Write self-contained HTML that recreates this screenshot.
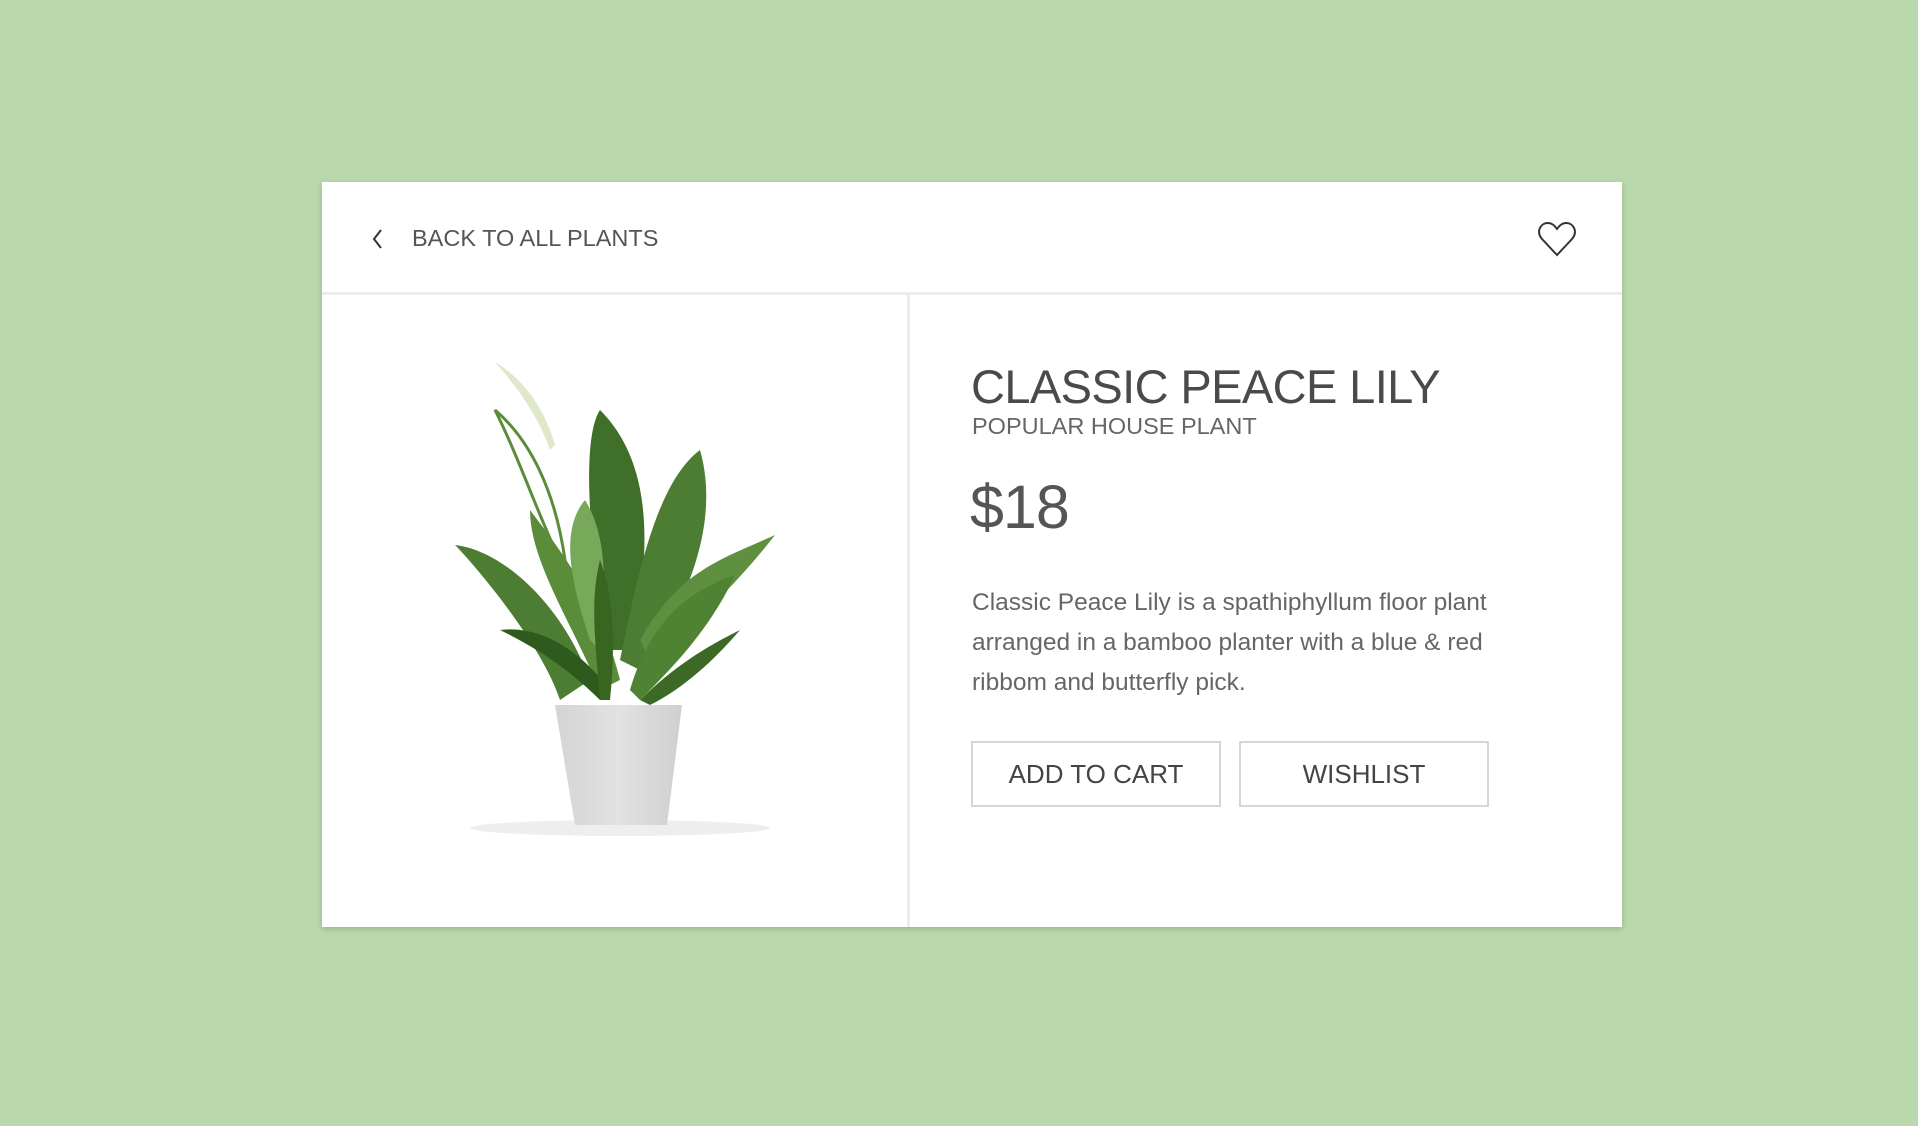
<!DOCTYPE html>
<html><head><meta charset="utf-8"><style>
html,body{margin:0;padding:0}
body{width:1918px;height:1126px;background:#b9d9ac;position:relative;overflow:hidden;font-family:"Liberation Sans",Arial,sans-serif}
.card{position:absolute;left:322px;top:182px;width:1300px;height:745px;background:#fff;box-shadow:0 2px 6px rgba(0,0,0,.18)}
.hdr{position:absolute;left:0;top:0;width:1300px;height:110px;border-bottom:3px solid #ececec}
.div{position:absolute;left:585px;top:113px;width:3px;height:632px;background:#ececec}
.t{position:absolute;white-space:nowrap}
.btn{position:absolute;top:559px;width:246px;height:62px;border:2px solid #d6d6d6;color:#444;font-size:26px;text-align:center;line-height:62px}
</style></head><body>
<div class="card">
<div class="hdr"></div>
<div class="div"></div>
<svg class="t" style="left:48px;top:45px" width="16" height="24" viewBox="0 0 16 24"><path d="M11 3 L4 12 L11 21" fill="none" stroke="#333" stroke-width="2"/></svg>
<div class="t" style="left:90px;top:43px;font-size:23.5px;color:#555">BACK TO ALL PLANTS</div>
<svg class="t" style="left:1215px;top:38px" width="40" height="38" viewBox="0 0 40 38"><path d="M20 35 L5 19 C-1 12 3 3 11 3 C15 3 18 6 20 9 C22 6 25 3 29 3 C37 3 41 12 35 19 Z" fill="none" stroke="#333" stroke-width="2"/></svg>
<div class="t" style="left:649px;top:177px;font-size:47px;color:#4a4a4a;letter-spacing:-0.6px">CLASSIC PEACE LILY</div>
<div class="t" style="left:650px;top:231px;font-size:23.5px;color:#666">POPULAR HOUSE PLANT</div>
<div class="t" style="left:648px;top:290px;font-size:61px;color:#555;letter-spacing:-1px">$18</div>
<div class="t" style="left:650px;top:401px;font-size:24.5px;color:#666;line-height:40px;white-space:normal;width:540px">Classic Peace Lily is a spathiphyllum floor plant arranged in a bamboo planter with a blue &amp; red ribbom and butterfly pick.</div>
<div class="btn" style="left:649px">ADD TO CART</div>
<div class="btn" style="left:917px">WISHLIST</div>
</div>
<svg style="position:absolute;left:0;top:0" width="1918" height="1126">
<defs><linearGradient id="pot" x1="0" x2="1"><stop offset="0" stop-color="#d4d4d4"/><stop offset=".5" stop-color="#e2e2e2"/><stop offset="1" stop-color="#cfcfcf"/></linearGradient></defs>
<ellipse cx="620" cy="828" rx="150" ry="8" fill="#eee"/>
<g fill="#4d7d32">
<path d="M560 700 C540 640 470 560 455 545 C500 550 560 600 590 680 Z"/>
<path d="M600 690 C570 620 530 560 530 510 C560 550 600 600 620 680 Z" fill="#5b8c3a"/>
<path d="M610 650 C590 560 580 440 600 410 C640 450 660 520 630 650 Z" fill="#3f6f28"/>
<path d="M620 660 C640 560 660 480 700 450 C720 520 690 600 640 670 Z"/>
<path d="M640 640 C680 570 720 560 775 535 C740 580 700 620 650 660 Z" fill="#5e9040"/>
<path d="M600 700 C560 660 520 640 500 630 C540 625 580 650 610 690 Z" fill="#2f5a1e"/>
<path d="M640 700 C680 660 720 640 740 630 C710 665 680 690 650 705 Z" fill="#3c6a26"/>
<path d="M630 690 C650 620 690 590 735 575 C710 630 670 670 640 700 Z" fill="#4f8333"/>
<path d="M590 640 C570 580 560 530 585 500 C610 540 605 600 600 650 Z" fill="#78a85a"/>
<path d="M600 700 C595 640 590 600 600 560 C615 600 615 650 610 700 Z" fill="#386520"/>
<path d="M560 560 C540 520 520 460 495 410 C530 440 555 490 565 560 Z" fill="none" stroke="#5b8c3a" stroke-width="3"/>
<path d="M550 450 C540 420 520 390 495 362 C525 380 545 410 555 445 Z" fill="#dfe8c8"/>
</g>
<path d="M555 705 L682 705 L667 825 L575 825 Z" fill="url(#pot)"/>
</svg>
</body></html>
